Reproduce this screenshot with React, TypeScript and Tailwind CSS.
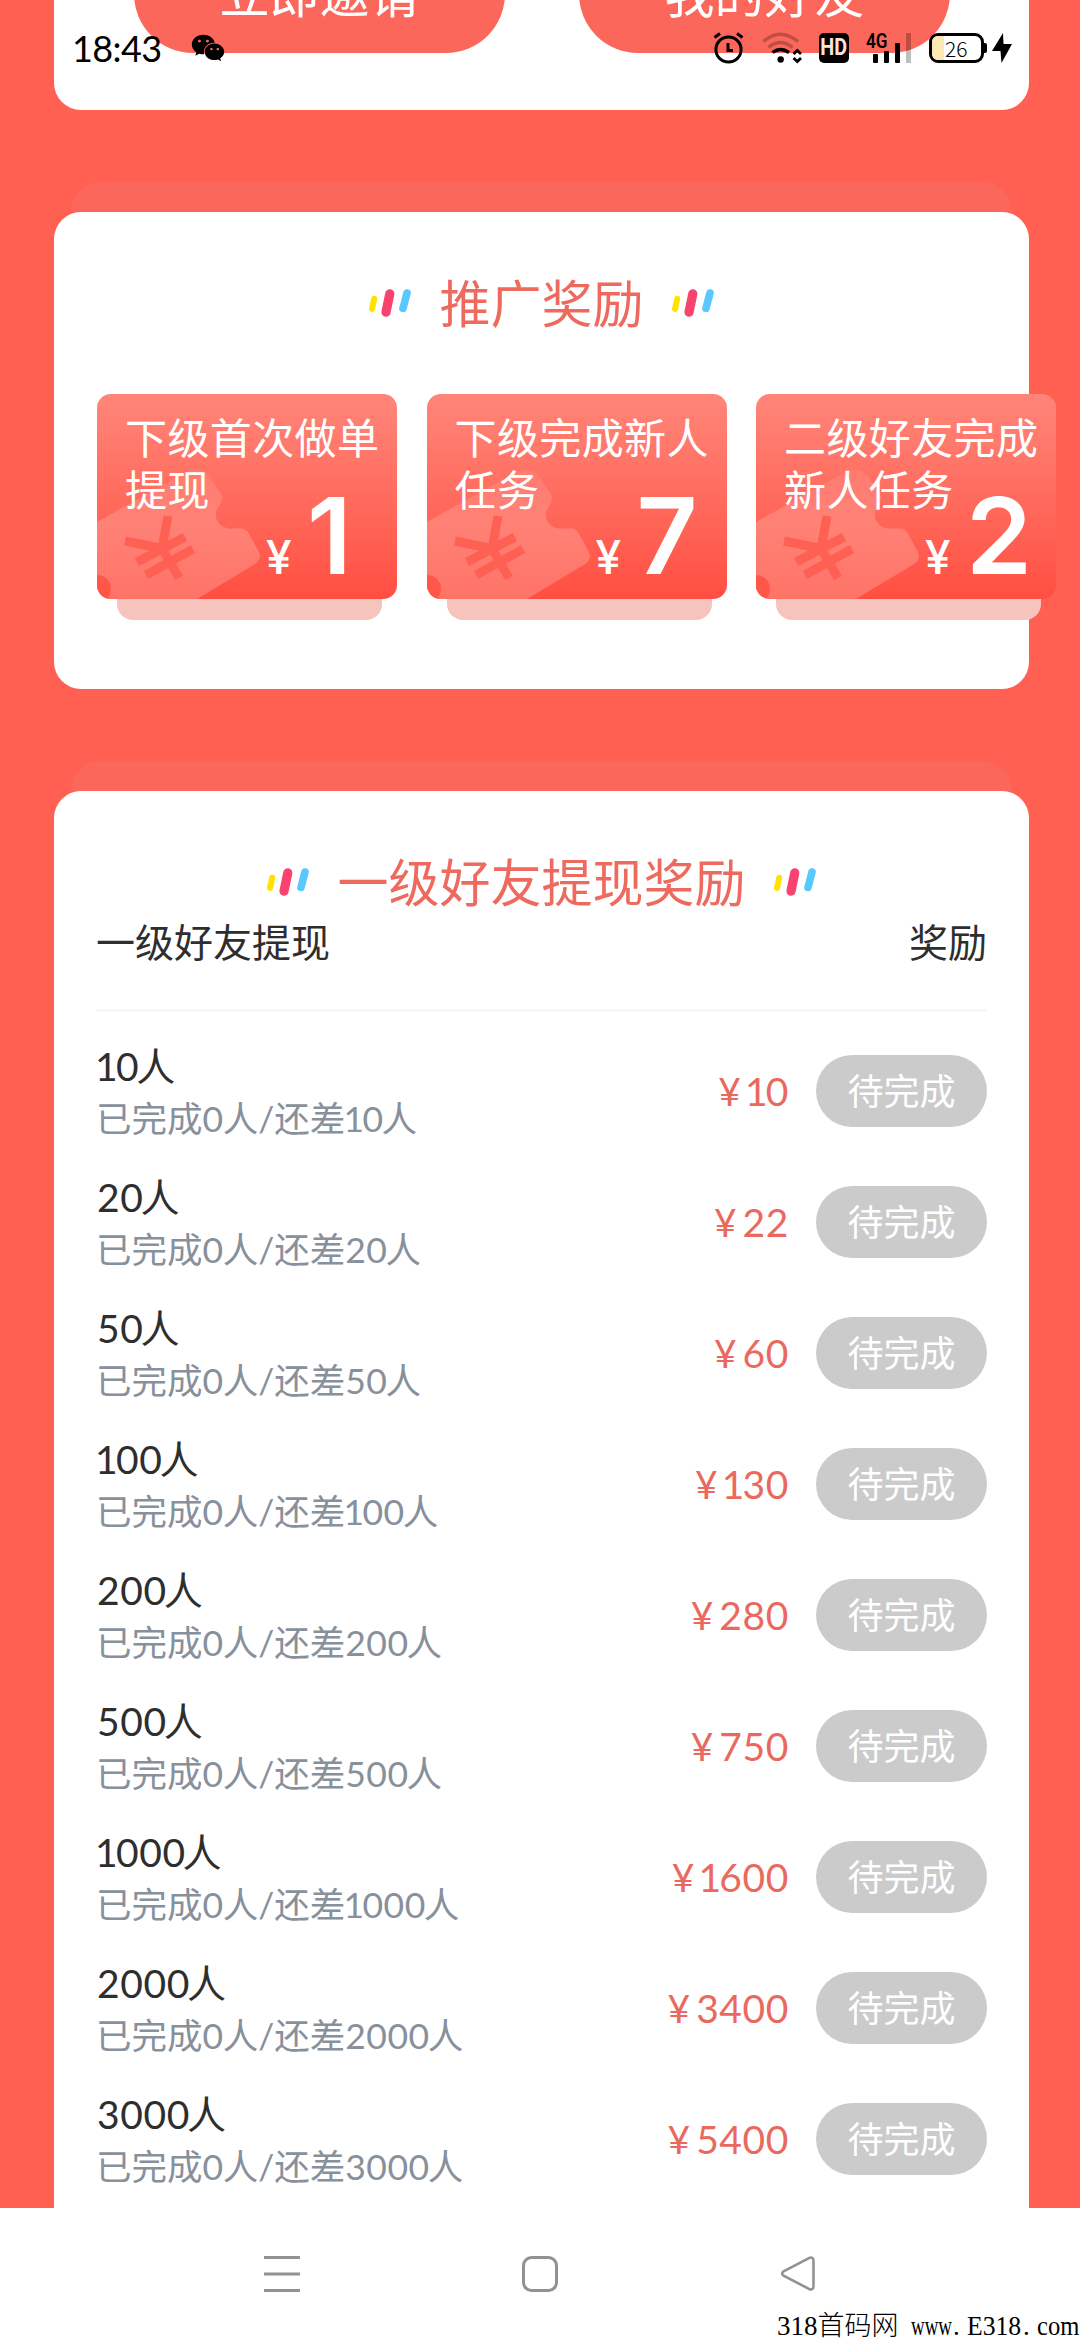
import React from "react";
import { FaWeixin } from "react-icons/fa";

const levels = [
  { people: "10", reward: "10" },
  { people: "20", reward: "22" },
  { people: "50", reward: "60" },
  { people: "100", reward: "130" },
  { people: "200", reward: "280" },
  { people: "500", reward: "750" },
  { people: "1000", reward: "1600" },
  { people: "2000", reward: "3400" },
  { people: "3000", reward: "5400" },
];

const tickets = [
  { label: "下级首次做单提现", amount: "1" },
  { label: "下级完成新人任务", amount: "7" },
  { label: "二级好友完成新人任务", amount: "2" },
];

function Digits({ value }: { value: string }) {
  return (
    <span className="tracking-[0.015em]">
      {value.split("").map((d, i) =>
        d === "1" ? (
          <span key={i} className="-ml-[0.05em] -mr-[0.06em]">
            1
          </span>
        ) : (
          d
        ),
      )}
    </span>
  );
}

function Stripes() {
  return (
    <svg className="-mt-[3px]" width="44" height="30" viewBox="0 0 44 30" fill="none" strokeLinecap="round">
      <path d="M6.2 10.8 4 21" stroke="#ffe200" strokeWidth="6" />
      <path d="M21.8 5.8 18 24.2" stroke="#f8436f" strokeWidth="9.2" />
      <path d="M39 5 35 20.4" stroke="#58c8ff" strokeWidth="7.6" />
    </svg>
  );
}

function Title({ children }: { children: React.ReactNode }) {
  return (
    <div className="flex h-[50px] items-center justify-center gap-[27px]">
      <Stripes />
      <h2 className="text-[51px] leading-[50px] text-[#ee695e]">{children}</h2>
      <Stripes />
    </div>
  );
}

function Ticket({ label, amount }: { label: string; amount: string }) {
  return (
    <div className="w-[300px] shrink-0">
      <div className="relative h-[205px] overflow-hidden rounded-[14px] bg-linear-to-b from-[#ff8579] to-[#ff4e41]">
        <svg className="absolute inset-0" width="300" height="205" viewBox="0 0 300 205" fill="none">
          <defs>
            <linearGradient id={"t" + amount} x1="0" y1="75" x2="0" y2="205" gradientUnits="userSpaceOnUse">
              <stop offset="0" stopColor="#ff7b70" />
              <stop offset="0.4" stopColor="#ff8277" />
              <stop offset="1" stopColor="#ff7367" />
            </linearGradient>
          </defs>
          <path
            d="M0 128 84 81Q102 70 112 82L124 100Q127 105 122 112C113 124 124 136 137 134.5L146 134.5Q150 136 152 140L162 158Q165 165 158 170L100 205H0Z"
            fill={"url(#t" + amount + ")"}
          />
          <circle cx="0" cy="195" r="14" fill="#ff5649" />
          <g stroke="#ff6054" strokeWidth="9">
            <path d="M71 122 65 155M28 147 67 155M63 151 82 184M40 168 88 143M49 181 96 155" />
          </g>
        </svg>
        <div className="relative ml-[28px] mt-[18px] w-[256px] text-[42px] leading-[52px] tracking-[0.4px] text-white">
          {label}
        </div>
        <div className="absolute left-[169px] top-[89px] flex items-baseline font-['Inter'] text-white">
          <span className="w-[41px] text-[46px] font-medium leading-[106px]">¥</span>
          <span className="text-[106px] font-semibold leading-[106px]">{amount}</span>
        </div>
      </div>
      <div className="ml-[20px] h-[21px] w-[265px] rounded-b-[16px] bg-[#f6c4bd]" />
    </div>
  );
}

function StatusBar() {
  return (
    <div className="absolute left-0 top-0 flex h-[96px] w-full items-center pl-[72px] text-black">
      <span className="w-[119px] text-[36px] leading-[40px] tracking-[-0.6px]">18:43</span>
      <FaWeixin size={34} />
      <div className="ml-[488px] flex h-[30px] items-center">
        <svg width="31" height="32" viewBox="0 0 31 32" fill="none" stroke="#000" strokeWidth="3">
          <circle cx="15.5" cy="17.5" r="12.6" />
          <path d="M15 11v7.5h5M1.5 5.5 7 1.5M29.5 5.5 24 1.5" />
        </svg>
        <svg className="ml-[18px]" width="40" height="32" viewBox="0 0 40 32" fill="none" stroke="#000" strokeWidth="3.4">
          <path d="M1.5 9.500Q18 -5 36 9.500M6.500 15.500Q18 5.500 30.500 15.500" strokeOpacity="0.24" />
          <path d="M10.500 20.500Q18.500 14.500 27 20.500" />
          <circle cx="18.700" cy="27.500" r="3.200" fill="#000" stroke="none" />
          <path d="M31.500 22 35.300 18.500 39 22M31.500 26 35.300 29.500 39 26" strokeWidth="2.800" />
        </svg>
        <span className="ml-[17px] flex h-[30px] w-[30px] items-center justify-center rounded-[5px] bg-black">
          <span className="scale-x-[0.86] font-['Roboto'] text-[23px] font-bold leading-[30px] text-[#ffe1dd]">HD</span>
        </span>
        <div className="relative ml-[18px] h-[30px] w-[46px]">
          <span className="absolute -left-px -top-[1px] origin-left scale-x-[0.86] font-['Roboto'] text-[20px] font-semibold leading-[18px]">
            4G
          </span>
          <div className="flex h-[30px] items-end gap-[6px] pl-[6px]">
            <i className="h-[9px] w-[5px] rounded-[1px] bg-black" />
            <i className="h-[12px] w-[5px] rounded-[1px] bg-black" />
            <i className="h-[20px] w-[5px] rounded-[1px] bg-black" />
            <i className="h-[30px] w-[5px] bg-black/25" />
          </div>
        </div>
        <div className="ml-[16px] flex h-[30px] w-[55px] items-center overflow-hidden rounded-[9px] border-[3px] border-black bg-white">
          <i className="h-full w-[12px] bg-[#fde9b3]" />
          <span className="ml-px font-['Noto_Sans_CJK_SC'] text-[21px] font-light leading-[24px]">26</span>
        </div>
        <i className="h-[10px] w-[3px] rounded-r-[2px] bg-black" />
        <svg className="ml-[5px]" width="20" height="30" viewBox="0 0 20 30">
          <path d="M11 0 0 18H8.500L9.500 30 20 11H11.500Z" />
        </svg>
      </div>
    </div>
  );
}

export default function App() {
  return (
    <div className="relative flex h-[2340px] w-[1080px] flex-col overflow-hidden bg-[#ff6052] font-['Lato','Noto_Sans_CJK_SC',sans-serif]">
      <main className="flex h-[2208px] flex-col overflow-hidden pl-[54px]">
        <section className="h-[110px] w-[975px] shrink-0 rounded-b-[27px] bg-white">
          <div className="-mt-[65px] flex gap-[74px] pl-[80px]">
            {["立即邀请", "我的好友"].map((t) => (
              <button
                key={t}
                className="h-[118px] w-[371px] rounded-full bg-[#fc675b] text-[50px] leading-[118px] text-white"
              >
                {t}
              </button>
            ))}
          </div>
        </section>

        <div className="ml-[17px] mt-[72px] h-[30px] w-[941px] shrink-0 rounded-t-[30px] bg-[#fc675b]" />
        <section className="h-[477px] w-[975px] shrink-0 rounded-[27px] bg-white pt-[67px]">
          <Title>推广奖励</Title>
          <div className="mt-[65px] flex gap-[29.5px] pl-[43px]">
            {tickets.map((t) => (
              <Ticket key={t.amount} {...t} />
            ))}
          </div>
        </section>

        <div className="ml-[17px] mt-[72px] h-[30px] w-[941px] shrink-0 rounded-t-[30px] bg-[#fc675b]" />
        <section className="w-[975px] shrink-0 rounded-t-[27px] bg-white px-[42px] pb-12 pt-[67px]">
          <Title>一级好友提现奖励</Title>
          <div className="mt-[9px] flex justify-between border-b-[3px] border-[#f7f7f7] pb-[42px] text-[39px] leading-[50px] text-[#2e2e2e]">
            <span>一级好友提现</span>
            <span>奖励</span>
          </div>
          <ul className="mt-[13.5px]">
            {levels.map((l) => (
              <li key={l.people} className="flex h-[131px] items-center">
                <div className="flex-1 pt-[2px]">
                  <p className="pl-px text-[39px] leading-[52px] text-[#2e2e2e]">
                    <Digits value={l.people} />
                    <span className="-ml-[3px]">人</span>
                  </p>
                  <p className="text-[35.5px] leading-[53px] text-[#87909b]">
                    已完成
                    <Digits value="0" />
                    <span className="-ml-px">人/还差</span>
                    <Digits value={l.people} />
                    <span className="-ml-[2px]">人</span>
                  </p>
                </div>
                <span className="text-[39px] leading-[52px] text-[#ea695f]">
                  <span className="mr-[6px]">¥</span>
                  <Digits value={l.reward} />
                </span>
                <button className="ml-[27px] h-[72px] w-[171px] rounded-full bg-[#cbcbcb] text-[36px] leading-[70px] text-white">
                  待完成
                </button>
              </li>
            ))}
          </ul>
        </section>
      </main>

      <nav className="relative h-[132px] bg-white">
        <div className="flex items-center gap-[222px] pl-[264px] pt-[48px]">
          <svg width="36" height="36" viewBox="0 0 36 36" stroke="#929292" strokeWidth="3">
            <path d="M0 1.500H36M0 18H36M0 34.500H36" />
          </svg>
          <svg width="36" height="36" viewBox="0 0 36 36" fill="none" stroke="#929292" strokeWidth="3">
            <rect x="1.500" y="1.500" width="33" height="33" rx="8" />
          </svg>
          <svg width="36" height="36" viewBox="0 0 36 36" fill="none" stroke="#929292" strokeWidth="2.600">
            <path d="M28.500 2.300 3.600 15.300Q0.600 17.500 3.600 19.700L28.500 32.700Q33.500 35 33.500 30V5Q33.500 0 28.500 2.300Z" />
          </svg>
        </div>
        <div className="absolute left-[777px] top-[104px] flex whitespace-pre font-['Liberation_Serif','Noto_Sans_CJK_SC',serif] text-[27px] leading-[29px] text-black">
          <span className="w-[134px] font-light">318首码网</span>
          <span className="w-[42px] origin-left scale-x-[0.7]">www</span>
          <span className="w-[14px]">.</span>
          <span className="w-[56px] origin-left scale-x-[0.95]">E318</span>
          <span className="w-[14px]">.</span>
          <span className="origin-left scale-x-[0.91]">com</span>
        </div>
      </nav>

      <StatusBar />
    </div>
  );
}
